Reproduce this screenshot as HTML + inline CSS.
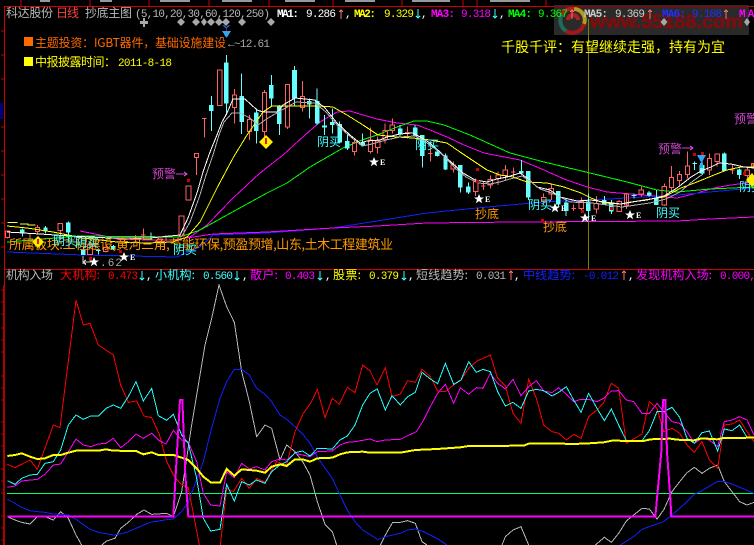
<!DOCTYPE html>
<html><head><meta charset="utf-8"><style>
html,body{margin:0;padding:0;background:#000;width:754px;height:545px;overflow:hidden}
svg{display:block}
text{font-family:"Liberation Sans","WenQuanYi Zen Hei","Noto Sans CJK SC",sans-serif;font-size:12px}
.c{font-family:"WenQuanYi Zen Hei","Noto Sans CJK SC",sans-serif}
.n{font-family:"Liberation Mono",monospace;font-size:11px}
.l{fill:none;stroke-width:1}
</style></head><body>
<svg width="754" height="545" viewBox="0 0 754 545" xmlns="http://www.w3.org/2000/svg" shape-rendering="crispEdges">
<rect width="754" height="545" fill="#000"/>
<!-- top frame -->
<path d="M21 0V6M90 0V6M149 0V6M209 0V6M269 0V6M333 0V6M402 0V6M463 0V6M477 0V6M546 0V6" stroke="#c00" fill="none"/>
<path d="M40 1h10M100 1h12M160 1h30M222 1h30M285 1h30M345 1h30M412 1h38M490 1h40" stroke="#999" stroke-width="2" fill="none"/>
<rect x="4" y="6" width="750" height="1" fill="#d00000"/>
<rect x="4" y="269" width="750" height="1" fill="#d00000"/>
<rect x="4" y="6" width="1" height="539" fill="#d00000"/>
<rect x="3" y="285" width="2" height="260" fill="#b00000"/>
<path d="M1 31h3M1 55h3M1 79h3M1 127h3M1 151h3M1 175h3M1 199h3M1 223h3M1 247h3M1 290h3M1 302h3M1 314h3M1 328h3M1 340h3M1 352h3M1 376h3M1 388h3M1 400h3M1 422h3M1 434h3M1 446h3M1 469h3M1 481h3M1 493h3M1 516h3M1 528h3M1 540h3" stroke="#c00000"/>
<rect x="0" y="103" width="3" height="16" fill="#000080"/>
<!-- watermark -->
<rect x="554" y="5" width="195" height="30" fill="#2a2a2a"/>
<rect x="554" y="6" width="195" height="1" fill="#a00000"/>
<g fill="none" stroke-width="4" shape-rendering="auto">
<path d="M574 9A11 11 0 0 1 584 24" stroke="#b59a20"/>
<path d="M584 24A12 12 0 0 1 566 31" stroke="#a01818"/>
<path d="M566 31A13 13 0 0 1 562 14" stroke="#1f6a58"/>
<path d="M562 14A12 12 0 0 1 574 9" stroke="#a82020"/>
<path d="M568 20A5 5 0 0 1 578 20" stroke="#b02020"/>
</g>
<text x="590" y="28" textLength="153" lengthAdjust="spacingAndGlyphs" shape-rendering="auto" style="font-size:19px;font-weight:bold;font-family:'Liberation Sans',sans-serif" fill="#7a0f0f" stroke="#7a0f0f" stroke-width=".6">www.55188.com</text>
<!-- olive line -->
<rect x="588" y="19" width="1" height="250" fill="#808000"/>
<!-- header text -->
<text class="c" x="6" y="17" textLength="47" fill="#b8b8b8">科达股份</text>
<text class="c" x="56" y="17" textLength="23" fill="#ff4040">日线</text>
<text class="c" x="85" y="17" textLength="47" fill="#b8b8b8">抄底主图</text>
<text class="n" x="135" y="17" textLength="135" fill="#b8b8b8">(5,10,20,30,60,120,250)</text>
<text class="n" x="277" y="17" textLength="22" fill="#fff" font-weight="bold">MA1:</text>
<text class="n" x="306" y="17" textLength="30" fill="#fff">9.286</text>
<text class="n" x="345" y="17" fill="#fff">,</text>
<text class="n" x="354" y="17" textLength="22" fill="#ff0" font-weight="bold">MA2:</text>
<text class="n" x="384" y="17" textLength="30" fill="#ff0">9.329</text>
<text class="n" x="421" y="17" fill="#fff">,</text>
<text class="n" x="431" y="17" textLength="24" fill="#f0f" font-weight="bold">MA3:</text>
<text class="n" x="461" y="17" textLength="30" fill="#f0f">9.318</text>
<text class="n" x="499" y="17" fill="#fff">,</text>
<text class="n" x="508" y="17" textLength="24" fill="#0f0" font-weight="bold">MA4:</text>
<text class="n" x="538" y="17" textLength="30" fill="#0f0">9.367</text>
<text class="n" x="584" y="17" textLength="24" fill="#ccc" font-weight="bold">MA5:</text>
<text class="n" x="615" y="17" textLength="30" fill="#ccc">9.369</text>
<text class="n" x="662" y="17" textLength="24" fill="#2030ff" font-weight="bold">MA6:</text>
<text class="n" x="692" y="17" textLength="30" fill="#2030ff">9.108</text>
<text class="n" x="739" y="17" textLength="24" fill="#f0f" font-weight="bold">MA7</text>
<!-- arrows header -->
<path d="M341 10V19M339 12l2-2 2 2M572 10V19M570 12l2-2 2 2M650 10V19M648 12l2-2 2 2M726 10V19M724 12l2-2 2 2" stroke="#ff7070" fill="none"/>
<path d="M418 9V18M416 16l2 2 2-2M495 9V18M493 16l2 2 2-2" stroke="#40ffff" fill="none"/>
<!-- diamonds -->
<g fill="#a8a8a8" shape-rendering="auto">
<path d="M143 18v3h-3v3h3v3h2v-3h3v-3h-3v-3z"/>
<path d="M181 18l4 4-4 4-4-4zM196 18l4 4-4 4-4-4zM204 18l3 4-3 4-3-4zM211 18l4 4-4 4-4-4zM219 18l4 4-4 4-4-4zM226 18l4 4-4 4-4-4zM242 18l4 4-4 4-4-4zM271 18l4 4-4 4-4-4zM664 18l3.500 4-3.500 4-3.500-4zM747 18l3 4-3 4-3-4z"/>
</g>
<path d="M222 25l4 4 4-4-2 0-2 2-2-2z" fill="#2a5cc0"/>
<path d="M222 31h9l-4.500 7z" fill="#30a8f0"/>
<rect x="226" y="29" width="1" height="2" fill="#c00000"/>
<!-- info text -->
<rect x="24" y="37" width="9" height="9" fill="#ff6a00"/>
<text class="c" x="35" y="47" textLength="191" fill="#ff6a00">主题投资：IGBT器件，基础设施建设</text>
<text class="n" x="228" y="47" textLength="42" fill="#a8a8a8">←~12.61</text>
<rect x="24" y="57" width="9" height="9" fill="#ff0"/>
<text class="c" x="35" y="66" textLength="81" fill="#ff0">中报披露时间：</text>
<text class="n" x="118" y="66" textLength="54" fill="#ff0">2011-8-18</text>
<text class="c" x="501" y="52" textLength="224" style="font-size:14px" fill="#ff0">千股千评：有望继续走强，持有为宜</text>

<!-- MA lines -->
<g class="l" fill="none">
<polyline class="l" stroke="#ff00ff" points="80,231 100,235 117,239 150,240 173,240 190,237 207,225 233,198 260,173 283,155 305,135 320,122 337,112 350,111 363,115 377,119 397,123 417,125 430,130 447,137 464,145 484,153 520,160 544,170 564,179 587,187 607,192 631,194 677,198 697,193 714,188 731,185 754,182"/>
<polyline class="l" stroke="#00ff00" points="7,242 80,236 180,237 200,230 227,215 267,193 287,183 310,167 343,148 362,140 377,135 397,127 414,121 427,121 444,125 470,135 510,153 544,162 590,173 627,182 657,190 677,192 710,189 754,187"/>
<polyline class="l" stroke="#1020ff" points="7,252 83,255 177,257 200,247 213,235 267,233 333,228 377,221 427,213 477,208 510,205 544,202 610,199 644,197 677,195 710,192 754,188"/>
<polyline class="l" stroke="#ff00ff" points="187,238 213,234 267,232 333,228 377,226 427,223 517,222 677,221 710,219 754,217"/>
</g>
<!-- candles: coordinates in 3x zoom space -->
<g transform="translate(190,55) scale(.33333)">
<path fill="#66ffff" d="M102 22h14v123h-14zM57 150h14v18h-14zM148 123h14v78h-14zM192 172h14v56h-14zM237 90h14v40h-14zM261 155h14v52h-14zM306 45h15v85h-15zM351 138h14v10h-14zM375 138h14v67h-14zM396 212h15v6h-15zM420 201h14v9h-14zM442 207h14v56h-14zM465 258h14v22h-14zM511 262h14v10h-14z"/>
<path stroke="#66ffff" stroke-width="3" fill="none" d="M109 0V180M64 123V228M155 55V237M199 160V265M244 60V155M268 150V240M314 33V155M358 130V190M381 100V210M404 180V240M427 160V235M449 200V260M472 235V285M518 235V275"/>
<path stroke="#ff6060" stroke-width="3" fill="none" d="M36 190h14M43 190V248M13 295h13v13h-13zM19 308V360M82 45h14v107h-14zM133 102V120M133 158V205M127 120h13v38h-13zM178 180V193M178 230V255M172 193h13v37h-13zM223 105V112M223 230V262M217 112h13v118h-13zM286 88h13v128h-13zM292 216V222M337 78V125M337 158V170M331 125h13v33h-13zM493 250V262M493 290V302M487 262h12v28h-12zM541 218V255M541 290V295M535 255h13v35h-13zM563 245V258M563 278V295M556 258h14v20h-14z"/>
</g>
<g transform="translate(380,110) scale(.33333)">
<path fill="#66ffff" d="M54 55h14v17h-14zM99 52h14v28h-14zM120 75h14v63h-14zM165 125h14v13h-14zM190 137h13v41h-13zM234 165h14v67h-14zM258 230h14v18h-14zM417 183h14v7h-14zM438 183h14v79h-14zM528 243h14v40h-14zM552 278h14v25h-14z"/>
<path stroke="#66ffff" stroke-width="3" fill="none" d="M60 45V82M105 45V80M128 75V172M172 120V140M197 130V180M242 165V248M265 218V252M424 150V190M446 183V270M535 243V290M558 265V318"/>
<path stroke="#ff6060" stroke-width="3" fill="none" d="M15 40V62M15 88V100M9 62h13v26h-13zM37 25V45M37 62V70M30 45h14v17h-14zM82 50V85M75 68h14M151 95V155M144 130h14M220 155V165M220 177V188M213 165h14v12h-14zM287 205V215M287 245V258M280 215h14v30h-14zM310 215V240M303 228h14M331 197V208M331 225V235M324 208h14v17h-14zM354 185V195M354 205V225M348 195h13v10h-13zM376 165V180M376 197V210M369 180h14v17h-14zM400 172V205M393 186h14M491 250V263M491 275V285M484 263h14v12h-14zM514 220V235M514 252V270M507 235h14v17h-14z"/>
</g>
<g transform="translate(564,110) scale(.33333)">
<path fill="#66ffff" d="M66 275h14v28h-14zM114 270h14v13h-14zM135 280h14v25h-14zM249 247h14v10h-14zM270 262h14v23h-14zM407 165h14v25h-14zM474 130h14v53h-14zM519 178h14v17h-14z"/>
<path stroke="#66ffff" stroke-width="3" fill="none" d="M73 250V330M121 258V285M142 270V312M210 250V265M203 257h14M255 243V260M277 240V285M392 155V180M385 160h14M414 145V192M481 127V185M526 175V207"/>
<path stroke="#ff6060" stroke-width="3" fill="none" d="M29 283V303M22 295h14M52 262V275M52 295V305M45 275h13v20h-13zM97 258V280M97 297V310M90 280h14v17h-14zM165 270V275M159 275h13v30h-13zM187 252V297M181 252h13v33h-13zM232 230V240M232 252V260M225 240h14v12h-14zM301 220V230M301 285V288M294 230h14v55h-14zM322 168V202M322 233V245M316 202h13v31h-13zM346 183V193M346 212V225M340 193h13v19h-13zM370 125V168M370 193V205M364 168h13v25h-13zM437 130V145M437 180V195M430 145h13v35h-13zM459 130V132M459 155V170M453 132h13v23h-13zM505 165V192M498 180h14M550 170V180M550 197V205M543 180h13v17h-13zM567 160V173M563 160h7v13h-7z"/>
</g>
<g transform="translate(0,210) scale(.33333)">
<path fill="#66ffff" d="M60 58h14v12h-14zM130 52h13v13h-13zM198 38h14v30h-14zM243 120h14v15h-14zM333 108h14v10h-14z"/>
<path stroke="#66ffff" stroke-width="3" fill="none" d="M67 55V80M136 48V70M205 35V95M250 110V135M295 115V133M288 122h14M340 105V120M453 68V88"/>
<path stroke="#ffff40" stroke-width="3" fill="none" d="M22 38h30M60 42h25M82 45h25"/>
<path stroke="#ff6060" stroke-width="3" fill="none" d="M16 63h13v19h-13zM22 82V85M113 45V52M113 65V70M106 52h13v13h-13zM174 40h14v22h-14zM181 62V90M90 70V85M270 100V105M263 105h14v28h-14zM318 105V112M318 125V128M311 112h13v13h-13zM407 75V95M400 85h14M430 55V85M423 75h14M498 75V95"/>
</g>
<g fill="none">
<rect x="186" y="186" width="5" height="14" stroke="#ff6060" stroke-width="1" fill="none"/>
<rect x="179" y="216" width="5" height="20" stroke="#ff6060" stroke-width="1" fill="none"/>
</g>
<!-- yellow & white MA over candles -->
<g fill="none">
<polyline stroke="#ffff00" points="7,226 27,228 53,232 83,238 117,242 147,243 173,242 187,237 200,222 217,188 233,158 247,135 263,112 272,106 293,106 320,106 333,107 347,115 363,125 378,135 397,137 413,138 430,140 447,143 460,152 472,160 487,170 500,175 513,177 527,182 547,183 564,187 581,193 591,198 604,203 621,204 644,200 664,197 681,188 697,182 714,175 727,170 741,167 754,167"/>
<polyline stroke="#ffffff" points="7,232 40,234 70,236 110,238 150,238 180,235 188,218 197,193 203,172 210,152 217,135 222,122 227,113 233,99 245,99 257,110 263,112 278,112 283,105 295,98 315,100 325,108 337,123 350,135 360,143 367,141 380,140 387,137 400,134 413,133 422,138 430,143 440,152 452,163 463,173 475,180 487,182 497,179 507,177 520,173 527,178 537,187 550,190 560,197 577,201 591,200 604,202 621,204 631,202 647,200 664,196 677,188 691,177 701,171 711,167 719,163 731,164 744,167 754,168"/>
<polyline stroke="#b0b0b0" points="182,236 190,222 199,198 206,175 213,155 219,135 224,122 232,113 240,113 250,118 258,125 268,118 282,110 296,102 315,103 326,112 338,126 352,138 362,146 372,144 386,140 400,137 415,136 424,141 433,147 445,157 455,168 466,177 478,183 490,184 500,182 510,179 522,176 530,181 540,189 552,193 570,202 592,203 622,207 650,203 666,199 680,192 693,181 703,174"/>
</g>
<!-- overlay labels -->
<text class="c" x="9" y="249" textLength="384" style="font-size:13px" fill="#ff9900">所属板块:工程建设,黄河三角,节能环保,预盈预增,山东,土木工程建筑业</text>
<g class="c" style="font-size:12px">
<text class="c" x="53" y="245" textLength="24" style="font-size:12px" fill="#40ffff">阴买</text>
<text class="c" x="75" y="247" textLength="24" style="font-size:12px" fill="#40ffff">阴买</text>
<text class="c" x="173" y="254" textLength="24" style="font-size:12px" fill="#40ffff">阴买</text>
<text class="c" x="317" y="146" textLength="24" style="font-size:12px" fill="#40ffff">阴买</text>
<text class="c" x="415" y="149" textLength="24" style="font-size:12px" fill="#40ffff">阴买</text>
<text class="c" x="528" y="209" textLength="24" style="font-size:12px" fill="#40ffff">阴买</text>
<text class="c" x="656" y="217" textLength="24" style="font-size:12px" fill="#40ffff">阴买</text>
<text class="c" x="739" y="191" textLength="24" style="font-size:12px" fill="#40ffff">阴买</text>
<text class="c" x="475" y="218" textLength="24" style="font-size:12px" fill="#ff9900">抄底</text>
<text class="c" x="543" y="231" textLength="24" style="font-size:12px" fill="#ff9900">抄底</text>
<text class="c" x="152" y="178" textLength="24" style="font-size:12px" fill="#cc44cc">预警</text>
<text class="c" x="658" y="153" textLength="24" style="font-size:12px" fill="#cc44cc">预警</text>
<text class="c" x="734" y="123" textLength="24" style="font-size:12px" fill="#cc44cc">预警</text>
</g>
<path d="M176 174h11M184 172l3 2-3 2M682 148h11M690 146l3 2-3 2" stroke="#cc44cc" fill="none"/>
<!-- stars -->
<g fill="#fff" shape-rendering="auto">
<path d="M374 157l1.500 3.500h3.500l-3 2.200 1.200 3.600-3.200-2.200-3.200 2.200 1.200-3.600-3-2.200h3.500z"/>
<path d="M479 194l1.500 3.500h3.500l-3 2.200 1.200 3.600-3.200-2.200-3.200 2.200 1.200-3.600-3-2.200h3.500zM555 203l1.500 3.500h3.500l-3 2.200 1.200 3.600-3.200-2.200-3.200 2.200 1.200-3.600-3-2.200h3.500zM585 213l1.500 3.500h3.500l-3 2.200 1.200 3.600-3.200-2.200-3.200 2.200 1.200-3.600-3-2.200h3.500zM630 210l1.500 3.500h3.500l-3 2.200 1.200 3.600-3.200-2.200-3.200 2.200 1.200-3.600-3-2.200h3.500zM124 252l1.500 3.500h3.500l-3 2.200 1.200 3.600-3.200-2.200-3.200 2.200 1.200-3.600-3-2.200h3.500zM94 257l1.500 3.500h3.500l-3 2.200 1.200 3.600-3.200-2.200-3.200 2.200 1.200-3.600-3-2.200h3.500z"/>
</g>
<g fill="#fff" style="font-size:8px">
<text x="380" y="165" style="font-size:8px;font-weight:bold;font-family:'Liberation Serif',serif">E</text>
<text x="485" y="202" style="font-size:8px;font-weight:bold;font-family:'Liberation Serif',serif">E</text>
<text x="561" y="211" style="font-size:8px;font-weight:bold;font-family:'Liberation Serif',serif">E</text>
<text x="591" y="221" style="font-size:8px;font-weight:bold;font-family:'Liberation Serif',serif">E</text>
<text x="636" y="218" style="font-size:8px;font-weight:bold;font-family:'Liberation Serif',serif">E</text>
<text x="130" y="260" style="font-size:8px;font-weight:bold;font-family:'Liberation Serif',serif">E</text>
</g>
<path d="M83 256v8M83 262l3 3M83 262h8M86 260l-3 2 3 2" stroke="#ccc" fill="none"/>
<text class="n" x="100" y="266" textLength="22" fill="#a8a8a8">.62</text>
<!-- red dots -->
<path d="M187 179h3v3h-3zM89 257h3v3h-3zM119 250h3v3h-3zM476 168h3v3h-3zM476 180h3v3h-3zM541 219h3v3h-3zM610 207h3v3h-3zM581 210h3v3h-3zM693 153h3v3h-3zM701 152h3v3h-3zM743 172h3v3h-3z" fill="#d00000"/>
<!-- yellow diamonds -->
<g shape-rendering="auto">
<path d="M266 135l7 7-7 7-7-7z" fill="#ffee00"/><path d="M265 138h2v6h-2z" fill="#d02000"/>
<path d="M38 236l6 6-6 6-6-6z" fill="#ffee00"/><path d="M37 239h2v5h-2z" fill="#d02000"/>
<path d="M752 173l6 7-6 7-6-7z" fill="#ffee00"/>
<path d="M697 155h9l-4.500 8z" fill="#30a8f0"/><rect x="700" y="163" width="3" height="5" fill="#30a8f0"/>
</g>

<!-- lower pane titles -->
<text class="c" x="6" y="279" textLength="47" fill="#b8b8b8">机构入场</text>
<text class="c" x="60" y="279" textLength="40" fill="#ff0000">大机构:</text>
<text class="n" x="108" y="279" textLength="30" fill="#ff0000">0.473</text>
<text class="n" x="146" y="279" fill="#fff">,</text>
<text class="c" x="155" y="279" textLength="40" fill="#40ffff">小机构:</text>
<text class="n" x="203" y="279" textLength="30" fill="#40ffff">0.560</text>
<text class="n" x="242" y="279" fill="#fff">,</text>
<text class="c" x="250" y="279" textLength="28" fill="#ff00ff">散户:</text>
<text class="n" x="285" y="279" textLength="30" fill="#ff00ff">0.403</text>
<text class="n" x="325" y="279" fill="#fff">,</text>
<text class="c" x="333" y="279" textLength="28" fill="#ffff00">股票:</text>
<text class="n" x="369" y="279" textLength="30" fill="#ffff00">0.379</text>
<text class="n" x="408" y="279" fill="#fff">,</text>
<text class="c" x="416" y="279" textLength="52" fill="#b8b8b8">短线趋势:</text>
<text class="n" x="476" y="279" textLength="30" fill="#b8b8b8">0.031</text>
<text class="n" x="514" y="279" fill="#fff">,</text>
<text class="c" x="523" y="279" textLength="52" fill="#1020ff">中线趋势:</text>
<text class="n" x="583" y="279" textLength="36" fill="#1020ff">-0.012</text>
<text class="n" x="628" y="279" fill="#fff">,</text>
<text class="c" x="636" y="279" textLength="76" fill="#ff00ff">发现机构入场:</text>
<text class="n" x="720" y="279" textLength="36" fill="#ff00ff">0.000,</text>
<path d="M142 271V280M140 278l2 2 2-2M237 271V280M235 278l2 2 2-2M320 271V280M318 278l2 2 2-2M404 271V280M402 278l2 2 2-2" stroke="#40ffff" fill="none"/>
<path d="M511 271V280M509 273l2-2 2 2M624 271V280M622 273l2-2 2 2" stroke="#ff7070" fill="none"/>

<!-- lower pane -->
<rect x="7" y="493" width="747" height="1" fill="#00ff60"/>
<g transform="translate(0,285) scale(.33333)" fill="none" stroke-width="3">
<polyline stroke="#b8b8b8" points="22,695 45,705 65,712 90,717 112,695 135,695 160,705 182,680 205,700 228,750 245,780"/>
<polyline stroke="#b8b8b8" points="305,780 320,768 345,760 362,730 385,712 410,688 432,675 455,688 500,685 520,695 545,620 575,420 600,270 615,180 635,100 657,0 680,65 703,112 725,260 748,350 770,455 795,420 815,430 840,525 860,480 885,500 908,530 930,570 952,650 975,718 997,740 1010,780"/>
<polyline stroke="#1020ff" points="22,643 45,655 65,667 90,677 112,680 135,682 160,687 205,690 228,703 270,733 295,742 340,750 362,747 385,740 408,730 450,712 500,704 520,702 545,680 565,650 610,530 632,440 660,340 680,290 703,253 725,253 748,270 770,310 795,328 815,350 840,390 860,403 885,425 908,447 930,475 952,515 975,550 997,580 1020,630 1042,675 1065,710 1088,735 1131,762"/>
<polyline stroke="#ff0000" points="22,538 45,548 90,525 112,553 160,420 180,428 228,45 250,120 270,115 295,180 340,210 362,300 385,352 410,348 432,393 455,398 478,448 500,530 520,570 545,600 565,608 600,790"/>
<polyline stroke="#ff0000" points="660,790 680,610 700,620 725,580 748,610 770,580 795,592 830,530 860,540 885,440 910,385 932,355 952,313 975,398 997,340 1018,358 1042,307 1065,323 1088,240 1110,258 1131,300"/>
<polyline stroke="#ff00ff" points="22,607 45,603 65,588 112,583 135,568 160,540 182,537 205,500 228,462 250,480 272,485 295,477 318,475 340,460 362,488 385,470 408,447 430,460 455,445 475,465 498,477 520,436 545,465 565,472 590,530 610,625 632,660 660,663 680,560 703,578 725,535 748,552 770,545 795,555 815,530 840,522 860,525 885,505 908,510 930,515 952,500 997,498 1020,480 1042,472 1065,470 1110,462 1131,470"/>
<polyline stroke="#20ffff" points="22,587 45,598 65,580 90,570 112,568 135,535 160,530 182,495 205,420 228,390 250,403 272,393 295,393 318,370 340,360 362,370 385,335 408,290 430,348 455,310 475,392 500,406 520,388 545,450 565,475 590,580 610,700 632,738 660,733 680,598 703,648 725,590 748,600 770,585 795,595 815,560 840,540 860,530 885,503 908,498 930,513 952,490 997,492 1020,465 1042,453 1065,420 1088,360 1110,325 1131,312"/>
<polyline stroke="#ffff00" stroke-width="6" points="22,513 45,510 65,505 90,515 112,522 135,520 160,510 182,510 205,503 228,497 295,497 318,493 340,497 408,498 430,508 455,502 475,510 520,510 545,518 565,525 590,550 610,575 632,592 660,593 680,552 703,572 725,553 770,557 795,563 815,545 840,538 860,543 885,523 908,523 930,530 952,520 997,518 1020,508 1042,502 1088,500 1110,503 1131,503"/>
<polyline stroke="#ff00ff" stroke-width="6" points="22,695 520,695 527,570 540,345 547,345 556,570 565,695 1131,695"/>
</g>
<g transform="translate(377,285) scale(.33333)" fill="none" stroke-width="3">
<polyline stroke="#b8b8b8" points="10,780 25,750 47,712 70,712 92,707 115,715 135,770 150,780"/>
<polyline stroke="#b8b8b8" points="375,780 385,755 408,735 432,725 455,780"/>
<polyline stroke="#b8b8b8" points="655,780 682,757 703,772 725,745 748,708 770,690 795,670 817,672 840,702 860,675 885,620 908,590 930,563 952,547 975,565 997,550 1022,540 1042,590 1065,620 1088,650 1110,660 1131,652"/>
<polyline stroke="#1020ff" points="0,765 25,755 70,745 92,735 115,732 140,740 180,760 210,780"/>
<polyline stroke="#1020ff" points="730,780 770,755 795,733 817,725 860,710 885,690 930,650 952,628 975,617 1020,590 1042,590 1065,597 1131,625"/>
<polyline stroke="#ff0000" points="0,300 25,248 45,335 70,327 92,287 115,292 135,253 160,275 182,318 205,320 230,300 252,285 275,250 300,228 340,210 362,280 385,303 408,385 432,415 455,283 478,340 500,420 525,440 545,445 568,465 590,448 612,460 635,395 660,375 680,353 703,295 725,310 748,475 770,462 795,447 817,350 840,370 860,440 885,430 908,445 930,480 952,502 975,470 997,525 1022,550 1042,420 1065,417 1088,405 1110,440 1131,470"/>
<polyline stroke="#ff00ff" points="0,470 25,465 70,463 92,452 118,440 140,405 160,365 182,325 205,298 230,355 250,308 275,328 298,308 318,310 340,265 362,295 385,312 408,283 432,332 455,305 478,287 500,318 525,323 545,308 568,328 590,350 612,343 635,343 660,350 680,340 703,318 725,317 748,345 770,350 795,385 817,385 840,355 860,380 885,410 908,415 930,440 952,475 975,460 997,465 1022,485 1042,410 1065,405 1088,395 1110,405 1131,450"/>
<polyline stroke="#20ffff" points="0,310 25,375 45,332 70,360 92,335 115,322 135,262 160,282 182,296 205,235 230,298 252,285 275,230 298,262 318,253 340,260 362,320 385,363 408,352 432,370 455,318 478,313 500,317 525,333 545,322 568,305 590,345 612,382 635,325 660,370 682,407 703,372 725,420 748,467 795,467 817,437 840,380 860,380 885,367 908,397 930,460 952,475 975,443 997,438 1022,498 1042,432 1065,437 1088,420 1110,457 1131,457"/>
<polyline stroke="#ffff00" stroke-width="6" points="0,503 70,503 115,495 180,492 250,487 275,483 440,482 455,476 555,476 590,477 635,475 680,472 705,467 800,468 820,463 880,461 900,464 950,466 975,460 1020,463 1040,459 1131,458"/>
<polyline stroke="#ff00ff" stroke-width="6" points="0,695 835,695 840,640 853,500 858,345 865,345 870,500 880,640 883,695 1131,695"/>
</g>
</svg>
</body></html>
